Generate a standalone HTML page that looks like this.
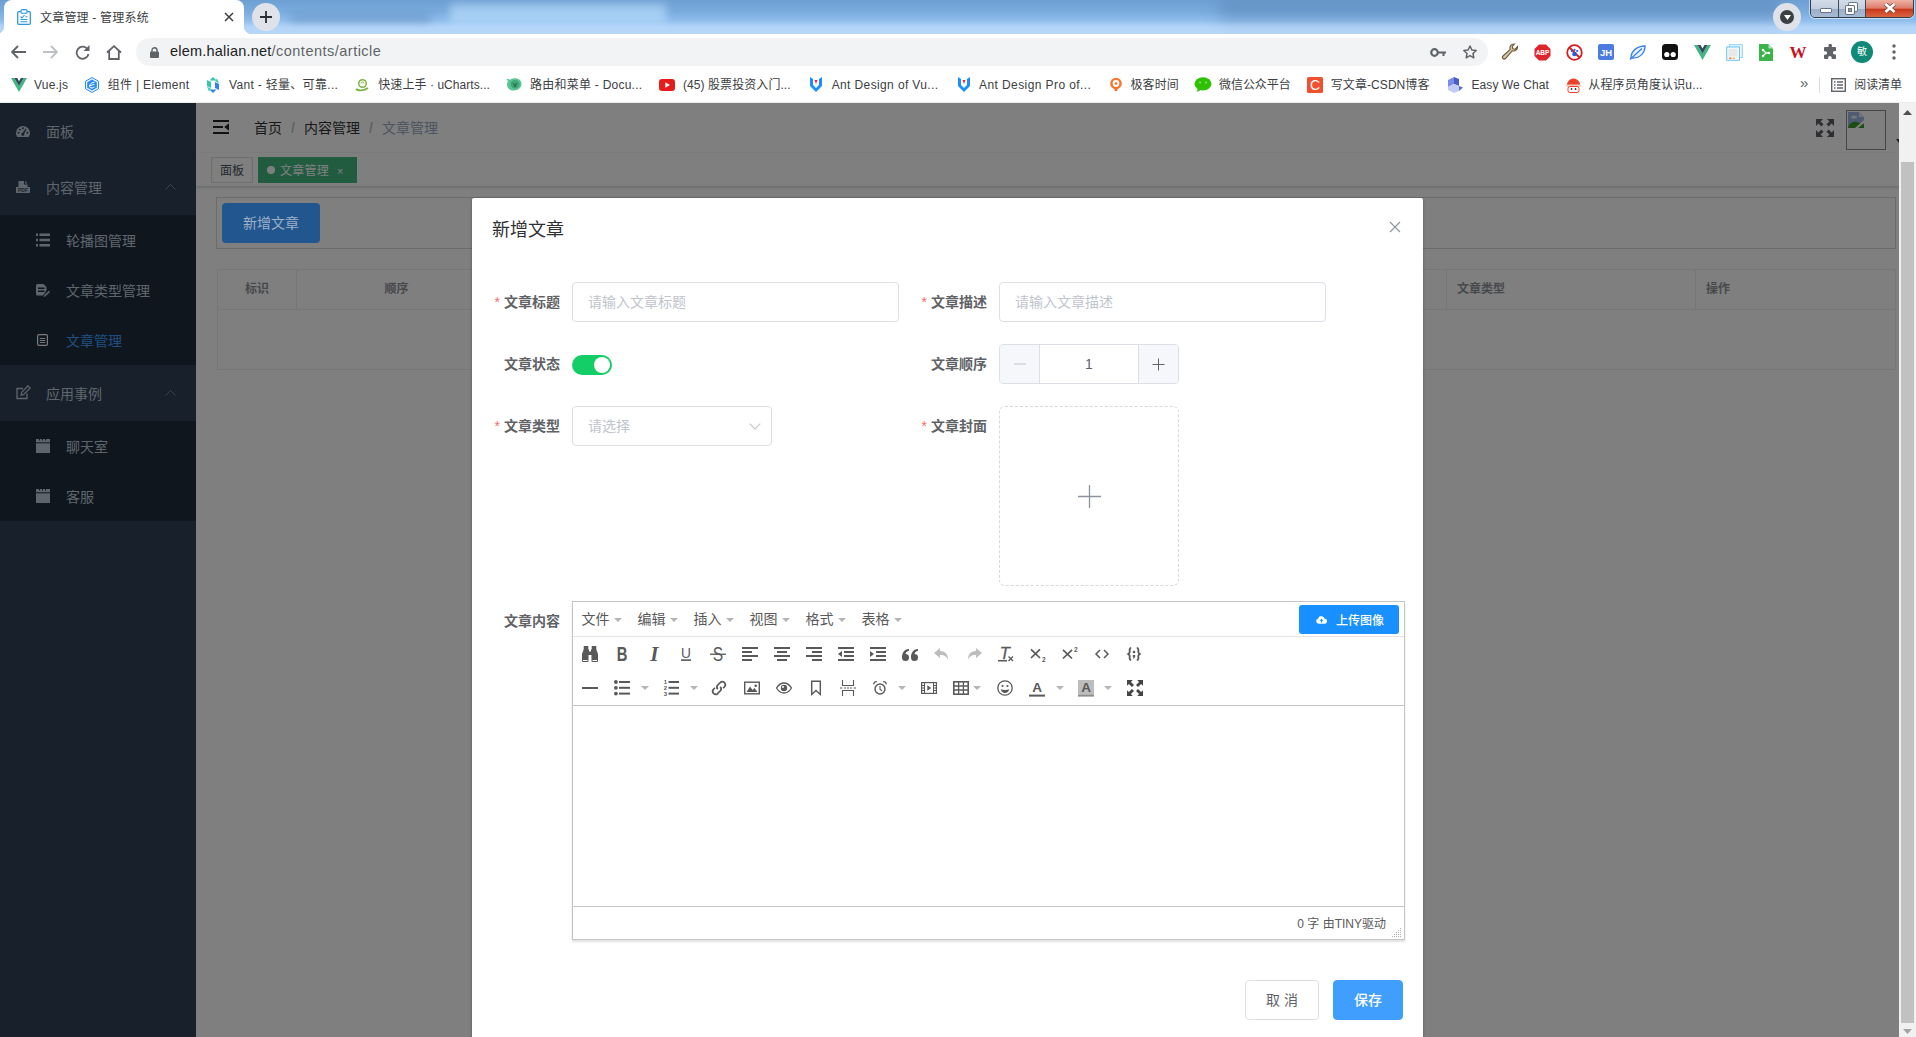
<!DOCTYPE html>
<html lang="zh-CN">
<head>
<meta charset="utf-8">
<title>文章管理 - 管理系统</title>
<style>
*{box-sizing:border-box;margin:0;padding:0}
html,body{width:1916px;height:1037px;overflow:hidden;background:#fff}
body{position:relative;font-family:"Liberation Sans","Noto Sans CJK SC",sans-serif;font-size:14px;color:#303133}
.abs{position:absolute}
svg{display:block}
/* ---------- browser chrome ---------- */
#tabbar{position:absolute;left:0;top:0;width:1916px;height:34px;background:linear-gradient(180deg,#6e9fd3 0,#7aacde 35%,#8fbdec 60%,#aacff5 74%,#b4d5f8 80%,#b6d7f9 100%)}
#tabbar .glow1{position:absolute;left:450px;top:4px;width:216px;height:20px;background:rgba(190,225,255,.6);filter:blur(4px)}
#tabbar .dark1{position:absolute;left:1220px;top:0;width:560px;height:20px;background:rgba(70,110,160,.35);filter:blur(8px)}
#tabbar .dark2{position:absolute;left:290px;top:14px;width:140px;height:9px;background:rgba(60,100,150,.28);filter:blur(4px)}
#tab{position:absolute;left:4px;top:0;width:240px;height:34px;background:#fff;border-radius:8px 8px 0 0}
#tab:before,#tab:after{content:"";position:absolute;bottom:0;width:8px;height:8px}
#tab:before{left:-8px;background:radial-gradient(circle at 0 0,transparent 8px,#fff 8.5px)}
#tab:after{right:-8px;background:radial-gradient(circle at 100% 0,transparent 8px,#fff 8.5px)}
#tab .title{position:absolute;left:36px;top:8px;font-size:12px;color:#3c4043;white-space:nowrap;letter-spacing:.2px}
#toolbar{position:absolute;left:0;top:34px;width:1916px;height:36px;background:#fff}
#omni{position:absolute;left:136px;top:4px;width:1352px;height:28px;border-radius:14px;background:#f1f3f4}
#omni .url{position:absolute;left:34px;top:5px;font-size:14.5px;color:#202124;white-space:nowrap;letter-spacing:.21px}
#omni .url span{color:#5f6368;letter-spacing:.49px}
#bmbar{position:absolute;left:0;top:70px;width:1916px;height:32px;background:#fff}
#bmbar .bm{position:absolute;top:7px;font-size:12px;color:#3c4043;white-space:nowrap;line-height:16px}
#chromeline{position:absolute;left:0;top:102px;width:1916px;height:1px;background:#ececec}

/* ---------- main (under overlay) ---------- */
#main{position:absolute;left:196px;top:0;width:1703px;height:934px;background:#fff}
#navbar{position:absolute;left:0;top:0;width:1703px;height:50px;background:#fff;box-shadow:0 1px 4px rgba(0,21,41,.08)}
#navbar .bc{position:absolute;top:15px;font-size:14px;line-height:20px;white-space:nowrap;color:#303133}
#navbar .bc.sep{color:#c0c4cc;font-weight:700}
#navbar .bc.last{color:#97a8be}
#tags{position:absolute;left:0;top:50px;width:1703px;height:34px;background:#fff;border-bottom:1px solid #d8dce5;box-shadow:0 1px 3px 0 rgba(0,0,0,.12),0 0 3px 0 rgba(0,0,0,.04)}
#tags .tag{position:absolute;top:4px;height:26px;line-height:26px;border:1px solid #d8dce5;font-size:12px;color:#495060;padding:0 8px;white-space:nowrap;background:#fff}
#tags .tag.on{background:#42b983;border-color:#42b983;color:#fff}
#tags .tag.on i{display:inline-block;width:8px;height:8px;border-radius:50%;background:#fff;margin-right:5px;position:relative;top:-1px}
#tags .tag.on b{font-weight:400;margin-left:8px;font-size:11px;letter-spacing:0}
#btnbox{position:absolute;left:20px;top:94px;width:1680px;height:52px;border:1px solid #d3d6db}
#btnbox .btn{position:absolute;left:4px;top:5px;width:98px;height:40px;border-radius:4px;background:#5c9ff8;background:#559cf5;color:#fff;font-size:14px;line-height:40px;text-align:center}
#tbl{position:absolute;left:21px;top:166px;width:1679px;height:101px;border:1px solid #ebeef5}
#tbl .hd{position:absolute;left:0;top:0;width:100%;height:40px;border-bottom:1px solid #ebeef5}
#tbl .th{position:absolute;top:0;height:39px;line-height:39px;font-size:12px;font-weight:700;color:#909399;border-right:1px solid #ebeef5;white-space:nowrap}

/* ---------- modal ---------- */
#modal{position:absolute;left:472px;top:95px;width:951px;height:842px;background:#fff;border-radius:2px;box-shadow:0 1px 3px rgba(0,0,0,.3)}
#modal .ttl{position:absolute;left:20px;top:20px;font-size:18px;line-height:24px;color:#303133;white-space:nowrap}
.lb{position:absolute;width:80px;height:40px;line-height:40px;padding-right:12px;text-align:right;font-size:14px;font-weight:700;color:#606266;white-space:nowrap}
.lb em{font-style:normal;font-weight:400;color:#f56c6c;margin-right:4px}
.inp{position:absolute;height:40px;border:1px solid #dcdfe6;border-radius:4px;background:#fff;font-size:14px;line-height:38px;color:#c0c4cc;padding-left:15px;white-space:nowrap}
.sw{position:absolute;left:100px;top:157px;width:40px;height:20px;border-radius:10px;background:#13ce66}
.sw:after{content:"";position:absolute;left:22px;top:2px;width:16px;height:16px;border-radius:50%;background:#fff}
.num{position:absolute;left:527px;top:146px;width:180px;height:40px;border:1px solid #dcdfe6;border-radius:4px;background:#fff;overflow:hidden}
.num .d,.num .i{position:absolute;top:0;width:40px;height:38px;background:#f5f7fa}
.num .d{left:0;border-right:1px solid #dcdfe6}
.num .i{right:0;border-left:1px solid #dcdfe6}
.num .v{position:absolute;left:40px;right:40px;top:0;line-height:38px;text-align:center;font-size:14px;color:#606266}
.upl{position:absolute;left:527px;top:208px;width:180px;height:180px;border:1px dashed #d9d9d9;border-radius:6px}
.fbtn{position:absolute;top:782px;height:40px;border-radius:4px;font-size:14px;line-height:38px;text-align:center;white-space:nowrap}

/* ---------- editor ---------- */
#ed{position:absolute;left:100px;top:403px;width:833px;height:339px;border:1px solid #c5c5c5;background:#fff;box-shadow:0 2px 2px rgba(0,0,0,.12)}
#ed .mb{position:absolute;left:0;top:0;width:831px;height:35px;border-bottom:1px solid #e3e3e3}
#ed .m{position:absolute;top:7px;font-size:14px;line-height:20px;color:#595959;white-space:nowrap}
#ed .m:after{content:"";position:absolute;left:32px;top:9px;border:4px solid transparent;border-top-color:#b5b5b5;border-bottom:0}
#ed .up{position:absolute;left:726px;top:3px;width:100px;height:29px;border-radius:3px;background:#1890ff;color:#fff;font-size:12px;line-height:29px;white-space:nowrap}
#ed .up span{position:absolute;left:37px;top:1.5px;font-weight:500}
#ed .tb{position:absolute;left:0;top:35px;width:831px;height:69px;border-bottom:1px solid #c5c5c5}
#ed .ic{position:absolute;width:16px;height:16px;overflow:visible}
#ed .ic text{font-family:"Liberation Sans",sans-serif}
#ed .cr{position:absolute;width:0;height:0;border:4px solid transparent;border-top-color:#b5b5b5;border-bottom:0}
#ed .sb{position:absolute;left:0;top:304px;width:831px;height:33px;border-top:1px solid #c5c5c5}
#ed .sb .t{position:absolute;right:18px;top:9px;font-size:12px;line-height:16px;color:#595959;white-space:nowrap}
/* ---------- page ---------- */
#page{position:absolute;left:0;top:103px;width:1899px;height:934px;overflow:hidden;background:#fff}
#sidebar{position:absolute;left:0;top:0;width:196px;height:934px;background:#304156}
.mi{position:absolute;left:0;width:196px;color:#bfcbd9;font-size:14px;white-space:nowrap}
.mi .tx{position:absolute;top:50%;margin-top:-9px;line-height:20px}
.mi.sub{background:#1f2d3d}
#overlay{position:absolute;left:0;top:0;width:1899px;height:934px;background:rgba(0,0,0,.5)}
#vscroll{position:absolute;left:1899px;top:103px;width:17px;height:934px;background:#f1f1f1}
#vscroll .thumb{position:absolute;left:2px;top:59px;width:13px;height:861px;background:#c1c1c1}
</style>
</head>
<body>
<!-- BROWSER CHROME -->
<div id="tabbar">
  <div class="glow1"></div><div class="dark1"></div><div class="dark2"></div>
  <div id="tab">
    <svg class="abs" style="left:13px;top:9px" width="14" height="16" viewBox="0 0 14 16"><rect x=".7" y="2.700" width="12.600" height="12.600" rx="1" fill="#fff" stroke="#2d9bd8" stroke-width="1.300"/><rect x="4" y=".6" width="6" height="3.600" rx="1" fill="#fff" stroke="#2d9bd8" stroke-width="1.100"/><path d="M3.500 7.500l1.500 1.500 2.500-3" fill="none" stroke="#2d9bd8" stroke-width="1.100"/><path d="M3.500 10.500h7M3.500 12.800h7M8.500 7.800h2" stroke="#2d9bd8" stroke-width="1.100"/></svg>
    <div class="title">文章管理 - 管理系统</div>
    <svg class="abs" style="left:220px;top:12px" width="10" height="10" viewBox="0 0 10 10"><path d="M1 1l8 8M9 1L1 9" stroke="#3c4043" stroke-width="1.500"/></svg>
  </div>
  <div class="abs" style="left:252px;top:3px;width:28px;height:28px;border-radius:50%;background:#dfe3e9"><svg class="abs" style="left:8px;top:8px" width="12" height="12" viewBox="0 0 12 12"><path d="M6 0v12M0 6h12" stroke="#2a2d31" stroke-width="1.800"/></svg></div>
  <div class="abs" style="left:1773px;top:3px;width:28px;height:28px;border-radius:50%;background:#dfe3e9"><div class="abs" style="left:7px;top:7px;width:14px;height:14px;border-radius:50%;background:#3c4043"><svg class="abs" style="left:3.500px;top:5px" width="7" height="5" viewBox="0 0 7 5"><path d="M0 0h7L3.500 5z" fill="#fff"/></svg></div></div>
  <div class="abs" style="left:1810px;top:-1px;width:104px;height:19px;border:1px solid #2f3c4c;border-radius:0 0 5px 5px;overflow:hidden;box-shadow:0 0 0 1px rgba(255,255,255,.55)">
    <div class="abs" style="left:0;top:0;width:28px;height:18px;background:linear-gradient(#d3dce8 0,#c2cede 48%,#9db0c8 52%,#a9bdd5 100%);border-right:1px solid #3d4a5c"><div class="abs" style="left:8.500px;top:8px;width:12px;height:5px;background:#fff;border:1px solid #66758a;border-radius:1px"></div></div>
    <div class="abs" style="left:28px;top:0;width:27px;height:18px;background:linear-gradient(#d3dce8 0,#c2cede 48%,#9db0c8 52%,#a9bdd5 100%);border-right:1px solid #3d4a5c"><div class="abs" style="left:10px;top:3px;width:8px;height:8px;border:2px solid #fff;border-radius:1px;box-shadow:0 0 0 1px #66758a"></div><div class="abs" style="left:7px;top:6px;width:8px;height:8px;border:2px solid #fff;border-radius:1px;box-shadow:0 0 0 1px #66758a,inset 0 0 0 1px #66758a;background:#8d9db3"></div></div>
    <div class="abs" style="left:55px;top:0;width:48px;height:18px;background:linear-gradient(#efb3a6 0,#dd7c68 45%,#c9391c 52%,#dd6a48 100%)"><svg class="abs" style="left:17.500px;top:3px" width="12" height="10" viewBox="0 0 12 10"><path d="M1.500 1l9 8M10.500 1l-9 8" stroke="#6a4a45" stroke-width="4.200"/><path d="M1.500 1l9 8M10.500 1l-9 8" stroke="#fff" stroke-width="2.700"/></svg></div>
  </div>
</div>
<div id="toolbar"><svg class="abs" style="left:10.5px;top:11.0px" width="15" height="14" viewBox="0 0 15 14"><path d="M7 1L1 7l6 6M1.500 7H15" fill="none" stroke="#5f6368" stroke-width="1.800"/></svg><svg class="abs" style="left:42.5px;top:11.0px" width="15" height="14" viewBox="0 0 15 14"><path d="M8 1l6 6-6 6M13.500 7H0" fill="none" stroke="#bdc1c6" stroke-width="1.800"/></svg><svg class="abs" style="left:74.5px;top:10.5px" width="15" height="15" viewBox="0 0 15 15"><path d="M12.500 4.200A6 6 0 1 0 13.500 9" fill="none" stroke="#5f6368" stroke-width="1.800"/><path d="M14.500 0v6h-6z" fill="#5f6368"/></svg><svg class="abs" style="left:106.0px;top:10.5px" width="16" height="15" viewBox="0 0 16 15"><path d="M1 7.500L8 1.200l7 6.300M3.200 6v8h9.600V6" fill="none" stroke="#5f6368" stroke-width="1.800"/></svg><div id="omni"><svg class="abs" style="left:13.5px;top:8.5px" width="9" height="11" viewBox="0 0 9 11"><rect x="0" y="4.500" width="9" height="6.500" rx="1" fill="#5f6368"/><path d="M2 5V3.200a2.500 2.500 0 0 1 5 0V5" fill="none" stroke="#5f6368" stroke-width="1.400"/></svg><div class="url">elem.halian.net<span>/contents/article</span></div></div><svg class="abs" style="left:1430.0px;top:13.5px" width="16" height="9" viewBox="0 0 16 9"><circle cx="4.500" cy="4.500" r="3.300" fill="none" stroke="#5f6368" stroke-width="2.200"/><path d="M8 3.500h8v2h-1.500V8h-2V5.500H8z" fill="#5f6368"/></svg><svg class="abs" style="left:1462.2px;top:10.0px" width="16" height="15" viewBox="0 0 16 15"><path d="M8 2l1.900 4 4.300.5-3.200 3 .8 4.300L8 11.700l-3.800 2.100.8-4.300-3.200-3 4.300-.5z" fill="none" stroke="#5f6368" stroke-width="1.500" stroke-linejoin="round"/></svg><svg class="abs" style="left:1501.0px;top:9.0px" width="18" height="18" viewBox="0 0 18 18"><path d="M16.500 3.500a4 4 0 0 1-5.300 4.300L4.500 15.500a1.700 1.700 0 0 1-2.500-2.500l7.200-6.700A4 4 0 0 1 13.500 1l-2.200 2.300.5 2.400 2.400.5z" fill="#d9c7a5" stroke="#6b5a3a" stroke-width="1.100"/></svg><svg class="abs" style="left:1533.5px;top:9.5px" width="17" height="17" viewBox="0 0 17 17"><path d="M5 .5h7L16.500 5v7L12 16.500H5L.5 12V5z" fill="#e0242d"/><text x="8.500" y="11.300" font-size="6.500" font-weight="700" fill="#fff" text-anchor="middle" font-family="Liberation Sans,sans-serif">ABP</text></svg><svg class="abs" style="left:1565.5px;top:9.5px" width="17" height="17" viewBox="0 0 17 17"><circle cx="8.500" cy="8.500" r="7.300" fill="#fff" stroke="#d81e1e" stroke-width="1.800"/><path d="M3.500 3.500l10 10" stroke="#d81e1e" stroke-width="1.800"/><circle cx="8.500" cy="10" r="2.300" fill="#2a5bd7"/><circle cx="5.800" cy="7" r="1.100" fill="#2a5bd7"/><circle cx="8.500" cy="5.800" r="1.100" fill="#2a5bd7"/><circle cx="11.200" cy="7" r="1.100" fill="#2a5bd7"/></svg><svg class="abs" style="left:1598.0px;top:10.0px" width="16" height="16" viewBox="0 0 16 16"><rect width="16" height="16" rx="2" fill="#4d7ce0"/><text x="8" y="12" font-size="9.500" font-weight="700" fill="#fff" text-anchor="middle" font-family="Liberation Sans,sans-serif">JH</text></svg><svg class="abs" style="left:1629.0px;top:10.0px" width="18" height="16" viewBox="0 0 18 16"><path d="M2 14C2 7 8 2 16 2c0 7-5 12-12 12z" fill="#eaf2ff" stroke="#3b82f0" stroke-width="1.400"/><path d="M1 15.500L13 4.500" stroke="#3b82f0" stroke-width="1.300"/></svg><svg class="abs" style="left:1662.0px;top:10.0px" width="16" height="16" viewBox="0 0 16 16"><rect width="16" height="16" rx="3.500" fill="#111"/><circle cx="4.800" cy="10.500" r="2.600" fill="#fff"/><circle cx="11.200" cy="10.500" r="2.600" fill="#fff"/></svg><svg class="abs" style="left:1693.5px;top:10.5px" width="17" height="15" viewBox="0 0 17 15"><path d="M0 0h3.500l5 8.500 5-8.500H17L8.500 15z" fill="#41b883"/><path d="M3.500 0h3l2 3.500 2-3.500h3l-5 8.500z" fill="#35495e"/></svg><svg class="abs" style="left:1725.5px;top:9.5px" width="17" height="17" viewBox="0 0 17 17"><rect x="3.500" y=".7" width="12.800" height="12.800" fill="#e6f6fd" stroke="#8fd3f4" stroke-width="1"/><rect x=".7" y="3" width="12.800" height="13.300" fill="#f3fbff" stroke="#6cc4ee" stroke-width="1"/><rect x="2.500" y="5" width="9" height="7.500" fill="#e8e8e8"/><rect x="3" y="13.600" width="2.500" height="1.200" fill="#f05a4f"/><rect x="6.500" y="13.600" width="2.500" height="1.200" fill="#f2b134"/></svg><svg class="abs" style="left:1759.0px;top:9.5px" width="14" height="17" viewBox="0 0 14 17"><path d="M0 0h9.500L14 4.500V17H0z" fill="#3bb54a"/><path d="M9.500 0L14 4.500H9.500z" fill="#b7e3bc"/><path d="M4 6l3 3-3 3M7 9h3" stroke="#fff" stroke-width="1.300" fill="none"/><circle cx="4" cy="6" r="1.200" fill="#fff"/><circle cx="4" cy="12" r="1.200" fill="#fff"/><circle cx="10" cy="9" r="1.200" fill="#fff"/></svg><div class="abs" style="left:1789px;top:6px;width:18px;height:24px;font:700 17px/25px 'Liberation Serif',serif;color:#c8101b;text-align:center">W</div><svg class="abs" style="left:1821.7px;top:10.0px" width="16" height="16" viewBox="0 0 16 16"><path d="M6.500 1.500a1.700 1.700 0 0 1 3.400 0V3H13a1 1 0 0 1 1 1v3h-1.300a1.800 1.800 0 0 0 0 3.600H14V14a1 1 0 0 1-1 1H9.700v-1.300a1.800 1.800 0 0 0-3.600 0V15H3a1 1 0 0 1-1-1v-3.200h1.300a1.800 1.800 0 0 0 0-3.600H2V4a1 1 0 0 1 1-1h3.500z" fill="#5f6368"/></svg><div class="abs" style="left:1851px;top:7px;width:22px;height:22px;border-radius:50%;background:#0f8a77;color:#fff;font-size:10px;line-height:22px;text-align:center">敏</div><svg class="abs" style="left:1892.2px;top:10.0px" width="4" height="16" viewBox="0 0 4 16"><circle cx="2" cy="2" r="1.700" fill="#5f6368"/><circle cx="2" cy="8" r="1.700" fill="#5f6368"/><circle cx="2" cy="14" r="1.700" fill="#5f6368"/></svg></div>
<div id="bmbar"><svg class="abs" style="left:11px;top:7.5px" width="16" height="14" viewBox="0 0 16 14"><path d="M0 0h3.300l4.700 8 4.700-8H16L8 14z" fill="#41b883"/><path d="M3.300 0h2.900L8 3.200 9.800 0h2.900L8 8z" fill="#35495e"/></svg><svg class="abs" style="left:84.2px;top:6.5px" width="16" height="16" viewBox="0 0 16 16"><path d="M8 .5l6.500 3.700v7.600L8 15.500 1.500 11.800V4.200z" fill="#eaf4ff" stroke="#2d8cf0" stroke-width="1"/><path d="M8 2.500l4.800 2.700v5.600L8 13.500 3.200 10.800V5.200z" fill="#2d8cf0"/><path d="M5.500 9.800c0-3 2.500-4.300 5-4.600M5.500 8.800l5-1.400M5.800 10.500c1.500.8 3.500.3 4.700-.5" stroke="#fff" stroke-width="1" fill="none"/></svg><svg class="abs" style="left:205.4px;top:6.5px" width="16" height="16" viewBox="0 0 16 16"><path d="M8 0l3.500 3.500H4.500z" fill="#38c6b4"/><path d="M2 3l4 2v6l-4-2z" fill="#36c2b2"/><path d="M14 13l-4-2V5l4 2z" fill="#2f86e8"/><path d="M8 16l-3.500-3.500h7z" fill="#2f86e8"/><path d="M2 9.500L6 12l-2 2.500z" fill="#34d0a8"/><path d="M14 6.500L10 4l2-2.500z" fill="#34d0a8"/></svg><svg class="abs" style="left:353.7px;top:7.5px" width="16" height="14" viewBox="0 0 16 14"><path d="M2 11c2 2 8 2 12-1" fill="none" stroke="#7cb342" stroke-width="1.800"/><circle cx="8.500" cy="5.500" r="3.800" fill="none" stroke="#7cb342" stroke-width="1.500"/><path d="M7 5.500a1.500 1.500 0 0 1 3 0" fill="none" stroke="#7cb342" stroke-width="1"/></svg><svg class="abs" style="left:506px;top:6.5px" width="16" height="16" viewBox="0 0 16 16"><path d="M8.500 1.200c4.500 0 7 2.300 7 5.800s-3 6.500-7.500 6.500S1 11 1 7.500c0-1.500.5-2.500 1-3.300-.3-.8-.8-1.500-1.500-2 1.500-.3 2.500 0 3.300.6C5 2 6.500 1.200 8.500 1.200z" fill="#5cc595"/><ellipse cx="9" cy="7.200" rx="4.500" ry="4.200" fill="#3da876"/><text x="9" y="9.500" font-size="6" font-weight="700" fill="#1f5a3e" text-anchor="middle" font-family="Liberation Sans,sans-serif">V</text></svg><svg class="abs" style="left:658.9px;top:8.5px" width="16" height="12" viewBox="0 0 16 12"><rect width="16" height="12" rx="3" fill="#e61c1c"/><path d="M6.300 3.200v5.600L11 6z" fill="#fff"/></svg><svg class="abs" style="left:809.2px;top:7.0px" width="14" height="15" viewBox="0 0 14 15"><path d="M1 0l3 2v6l3 3 3-3V2l3-2v9l-6 6-6-6z" fill="#1890ff"/><path d="M5.500 3h3l-1.500 4z" fill="#f5222d"/></svg><svg class="abs" style="left:956.5px;top:7.0px" width="14" height="15" viewBox="0 0 14 15"><path d="M1 0l3 2v6l3 3 3-3V2l3-2v9l-6 6-6-6z" fill="#1890ff"/><path d="M5.500 3h3l-1.500 4z" fill="#f5222d"/></svg><svg class="abs" style="left:1108.8px;top:6.5px" width="14" height="16" viewBox="0 0 14 16"><circle cx="7" cy="6.500" r="4.600" fill="none" stroke="#f7752d" stroke-width="2.400"/><path d="M5 10.500h4l-.8 3.500H5.800z" fill="#f7752d"/><circle cx="7" cy="6.500" r="1.300" fill="#f7752d"/></svg><svg class="abs" style="left:1194px;top:7.0px" width="18" height="15" viewBox="0 0 18 15"><ellipse cx="9" cy="6.800" rx="8.500" ry="6.600" fill="#2dc100"/><path d="M4 11.500l-1.500 3.500 4.500-2z" fill="#2dc100"/><circle cx="6" cy="5.500" r="1.100" fill="#8ee07a"/><circle cx="12" cy="5.500" r="1.100" fill="#8ee07a"/></svg><svg class="abs" style="left:1306.7px;top:6.5px" width="16" height="16" viewBox="0 0 16 16"><rect width="16" height="16" rx="1.500" fill="#f0502f"/><text x="8" y="13" font-size="14" fill="#fff" text-anchor="middle" font-family="Liberation Sans,sans-serif">C</text></svg><svg class="abs" style="left:1446px;top:6.5px" width="18" height="16" viewBox="0 0 18 16"><path d="M8 0l5 2v7l-5-2z" fill="#4b5cc4"/><path d="M8 0v7L2 10V3z" fill="#7b8ce8"/><path d="M2 10l6-3 5 2v5l-5 2-6-3z" fill="#c3cbf7"/><path d="M13 9l4 1.500-4 3.500z" fill="#5b6fd8"/></svg><svg class="abs" style="left:1564.8px;top:6.5px" width="17" height="16" viewBox="0 0 17 16"><path d="M2 8a6.500 6.500 0 0 1 13 0z" fill="#e8412c"/><rect x="1" y="7.500" width="15" height="2.200" rx="1" fill="#f6c7b8"/><rect x="3" y="9.500" width="11" height="6" rx="2" fill="#fff" stroke="#e8412c" stroke-width="1"/><circle cx="6.500" cy="12" r=".9" fill="#333"/><circle cx="10.500" cy="12" r=".9" fill="#333"/></svg><div class="bm" style="left:34px;letter-spacing:0.199px">Vue.js</div><div class="bm" style="left:107.7px;letter-spacing:0.324px">组件 | Element</div><div class="bm" style="left:229px;letter-spacing:0.315px">Vant - 轻量、可靠...</div><div class="bm" style="left:378.3px;letter-spacing:0.060px">快速上手 · uCharts...</div><div class="bm" style="left:530.1px;letter-spacing:0.234px">路由和菜单 - Docu...</div><div class="bm" style="left:683px;letter-spacing:0.072px">(45) 股票投资入门...</div><div class="bm" style="left:831.7px;letter-spacing:0.378px">Ant Design of Vu...</div><div class="bm" style="left:979px;letter-spacing:0.412px">Ant Design Pro of...</div><div class="bm" style="left:1130.4px;letter-spacing:0.150px">极客时间</div><div class="bm" style="left:1219px;letter-spacing:-0.053px">微信公众平台</div><div class="bm" style="left:1330.8px;letter-spacing:0.070px">写文章-CSDN博客</div><div class="bm" style="left:1471.5px;letter-spacing:0.068px">Easy We Chat</div><div class="bm" style="left:1588.3px;letter-spacing:0.134px">从程序员角度认识u...</div><div class="bm" style="left:1854.3px;letter-spacing:-0.125px">阅读清单</div><div class="bm" style="left:1800px;top:5px;font-size:15px;color:#5f6368">»</div><div class="abs" style="left:1819px;top:7px;width:1px;height:16px;background:#dadce0"></div><svg class="abs" style="left:1831px;top:7.5px" width="15" height="14" viewBox="0 0 15 14"><rect x=".7" y=".7" width="13.600" height="12.600" fill="none" stroke="#5f6368" stroke-width="1.400"/><path d="M3 4h1.500M3 7h1.500M3 10h1.500M6 4h6M6 7h6M6 10h6" stroke="#5f6368" stroke-width="1.400"/></svg></div>
<div id="chromeline"></div>
<!-- PAGE -->
<div id="page">
  <div id="main">
    <div id="navbar">
      <svg class="abs" style="left:17px;top:17px" width="17" height="14" viewBox="0 0 17 14"><path d="M0 0h16v2H0zM0 6h10v2H0zM0 12h16v2H0zM16 3.2v7.6L11.2 7z" fill="#222"/></svg>
      <div class="bc" style="left:58px">首页</div>
      <div class="bc sep" style="left:95px">/</div>
      <div class="bc" style="left:108px">内容管理</div>
      <div class="bc sep" style="left:173px">/</div>
      <div class="bc last" style="left:186px">文章管理</div>
      <svg class="abs" style="left:1620px;top:16px" width="18" height="18" viewBox="0 0 18 18"><path d="M0 0h7L4.6 2.4 7.5 5.3 5.3 7.5 2.4 4.6 0 7zM18 0v7l-2.4-2.4-2.9 2.9-2.2-2.2 2.9-2.9L11 0zM0 18v-7l2.4 2.4 2.9-2.9 2.2 2.2-2.9 2.9L7 18zM18 18h-7l2.4-2.4-2.9-2.9 2.2-2.2 2.9 2.9L18 11z" fill="#5a5e66"/></svg>
      <div class="abs" style="left:1650px;top:7px;width:40px;height:40px;border:1px solid #8a8f96;border-radius:0">
        <svg class="abs" style="left:1px;top:1px" width="16" height="16" viewBox="0 0 16 16"><path d="M0 0h11l5 5v11H0z" fill="#9db7e0"/><path d="M11 0l5 5h-5z" fill="#dfe8f5"/><path d="M0 16c1-5 5-7 9-6l7 2v4z" fill="#3a9a2a"/><path d="M7 16l9-8v3l-6 5z" fill="#fff"/><ellipse cx="6" cy="5" rx="3" ry="1.6" fill="#e8eef8"/></svg>
      </div>
      <svg class="abs" style="left:1700px;top:36px" width="6" height="4" viewBox="0 0 6 4"><path d="M0 0h6L3 4z" fill="#333"/></svg>
    </div>
    <div id="tags">
      <div class="tag" style="left:15px">面板</div>
      <div class="tag on" style="left:62px;width:99px;letter-spacing:.25px"><i></i>文章管理<b>×</b></div>
    </div>
    <div id="btnbox"></div>
    <div id="tbl">
      <div class="hd"></div>
      <div class="th" style="left:0;width:79px;text-align:center">标识</div>
      <div class="th" style="left:79px;width:200px;text-align:center">顺序</div>
      <div class="th" style="left:1228px;width:250px;padding-left:10px;border-left:1px solid #ebeef5">文章类型</div>
      <div class="th" style="left:1478px;width:200px;padding-left:10px;border-right:0">操作</div>
    </div>
  </div>
  <div id="sidebar">
<div class="mi" style="top:0px;height:56px"><svg class="abs" style="left:16px;top:22.5px" width="14" height="11" viewBox="0 0 14 11"><path d="M7 0a7 7 0 0 0-7 7c0 1.500.5 2.900 1.300 4h11.400c.8-1.100 1.300-2.500 1.300-4a7 7 0 0 0-7-7z" fill="#bfcbd9"/><circle cx="2.600" cy="6.800" r=".95" fill="#304156"/><circle cx="3.900" cy="3.600" r=".95" fill="#304156"/><circle cx="11.400" cy="6.800" r=".95" fill="#304156"/><circle cx="7" cy="2.300" r=".95" fill="#304156"/><path d="M9.600 2.800l.9.500-2.300 4.300a1.500 1.500 0 1 1-1.500-.8z" fill="#304156"/></svg><span class="tx" style="left:46px">面板</span></div>
<div class="mi" style="top:56px;height:56px"><svg class="abs" style="left:16px;top:22px" width="14" height="12" viewBox="0 0 14 12"><path d="M2.500 0h5.500v3.500h3.500V6h-9z" fill="#bfcbd9"/><path d="M9 0l2.500 2.500H9z" fill="#bfcbd9"/><rect x="0" y="6" width="14" height="6" fill="#bfcbd9"/><text x="7" y="10.800" font-size="5" font-weight="700" text-anchor="middle" fill="#304156" font-family="Liberation Sans,sans-serif">PDF</text></svg><span class="tx" style="left:46px">内容管理</span><svg class="abs" style="left:165px;top:25px" width="11" height="6" viewBox="0 0 11 6"><path d="M.5 5.5l5-5 5 5" fill="none" stroke="#7a8898" stroke-width="1"/></svg></div>
<div class="mi sub" style="top:112px;height:50px"><svg class="abs" style="left:36px;top:18px" width="14" height="14" viewBox="0 0 14 14"><path d="M0 .5h2v2.500H0zM3.500 .5H14v2.500H3.500zM0 5.700h2v2.500H0zM3.500 5.700H14v2.500H3.500zM0 11h2v2.500H0zM3.500 11H14v2.500H3.500z" fill="#bfcbd9"/></svg><span class="tx" style="left:66px">轮播图管理</span></div>
<div class="mi sub" style="top:162px;height:50px"><svg class="abs" style="left:36px;top:18.500px" width="14" height="13" viewBox="0 0 14 13"><path d="M1.500 0h6l3 3v3.500L7 11.500H1.500A1.500 1.500 0 0 1 0 10V1.500A1.500 1.500 0 0 1 1.500 0z" fill="#bfcbd9"/><path d="M2 4.200h6.500M2 7.200h6.500" stroke="#1f2d3d" stroke-width="1.400"/><path d="M12.800 6.800l1.200 1.200-4.800 4.600-1.600.4.400-1.600z" fill="#bfcbd9"/></svg><span class="tx" style="left:66px">文章类型管理</span></div>
<div class="mi sub" style="top:212px;height:50px;color:#409eff"><svg class="abs" style="left:37px;top:19px" width="11" height="12" viewBox="0 0 11 12"><rect x=".6" y=".6" width="9.800" height="10.800" rx="1.300" fill="none" stroke="#f4f6f8" stroke-width="1.200"/><path d="M2.800 4.500h5.400M2.800 6.500h5.400M2.800 8.500h5.400" stroke="#e8ecf0" stroke-width="1"/></svg><span class="tx" style="left:66px">文章管理</span></div>
<div class="mi" style="top:262px;height:56px"><svg class="abs" style="left:16px;top:20px" width="15" height="15" viewBox="0 0 15 15"><path d="M11 8.500V13.500H1V3.500h6" fill="none" stroke="#bfcbd9" stroke-width="1.300"/><path d="M12 .8l2.200 2.200-6.400 6.400-2.800.700.700-2.800z" fill="none" stroke="#bfcbd9" stroke-width="1.200"/></svg><span class="tx" style="left:46px">应用事例</span><svg class="abs" style="left:165px;top:25px" width="11" height="6" viewBox="0 0 11 6"><path d="M.5 5.5l5-5 5 5" fill="none" stroke="#7a8898" stroke-width="1"/></svg></div>
<div class="mi sub" style="top:318px;height:50px"><svg class="abs" style="left:36px;top:17px" width="14" height="15" viewBox="0 0 14 15"><path d="M0 1h3v1.500h1V1h2v1.500h1V1h2v1.500h1V1h4v14H0z" fill="#bfcbd9"/><rect x="0" y="4.300" width="14" height="1" fill="#1f2d3d"/></svg><span class="tx" style="left:66px">聊天室</span></div>
<div class="mi sub" style="top:368px;height:50px"><svg class="abs" style="left:36px;top:17px" width="14" height="15" viewBox="0 0 14 15"><path d="M0 1h3v1.500h1V1h2v1.500h1V1h2v1.500h1V1h4v14H0z" fill="#bfcbd9"/><rect x="0" y="4.300" width="14" height="1" fill="#1f2d3d"/></svg><span class="tx" style="left:66px">客服</span></div>
</div>
  <div id="overlay"></div>
  <div class="abs" style="left:222px;top:100px;width:98px;height:40px;border-radius:4px;background:#22568f;color:#9fb0c6;font-size:14px;line-height:40px;text-align:center">新增文章</div>
  <div id="modal">
    <div class="ttl">新增文章</div>
    <svg class="abs" style="left:917px;top:23px" width="12" height="12" viewBox="0 0 12 12"><path d="M1 1l10 10M11 1L1 11" stroke="#909399" stroke-width="1.100" fill="none"/></svg>
    <div class="lb" style="left:20px;top:84px"><em>*</em>文章标题</div>
    <div class="inp" style="left:100px;top:84px;width:327px">请输入文章标题</div>
    <div class="lb" style="left:447px;top:84px"><em>*</em>文章描述</div>
    <div class="inp" style="left:527px;top:84px;width:327px">请输入文章描述</div>
    <div class="lb" style="left:20px;top:146px">文章状态</div>
    <div class="sw"></div>
    <div class="lb" style="left:447px;top:146px">文章顺序</div>
    <div class="num"><div class="d"><svg class="abs" style="left:14px;top:18px" width="12" height="2"><rect width="12" height="1" y=".5" fill="#c0c4cc"/></svg></div><div class="v">1</div><div class="i"><svg class="abs" style="left:13px;top:13px" width="13" height="13" viewBox="0 0 13 13"><path d="M6.500 .5v12M.5 6.500h12" stroke="#606266" stroke-width="1"/></svg></div></div>
    <div class="lb" style="left:20px;top:208px"><em>*</em>文章类型</div>
    <div class="inp" style="left:100px;top:208px;width:200px">请选择<svg class="abs" style="left:176px;top:16px" width="12" height="7" viewBox="0 0 12 7"><path d="M.7 .7l5.300 5.300L11.300 .7" fill="none" stroke="#c0c4cc" stroke-width="1.100"/></svg></div>
    <div class="lb" style="left:447px;top:208px"><em>*</em>文章封面</div>
    <div class="upl"><svg class="abs" style="left:78px;top:78px" width="23" height="23" viewBox="0 0 23 23"><path d="M11.500 0v23M0 11.500h23" stroke="#8c939d" stroke-width="1.300"/></svg></div>
    <div class="lb" style="left:20px;top:403px">文章内容</div>
    <div id="ed">
      <div class="mb"><div class="m" style="left:8.5px">文件</div><div class="m" style="left:64.5px">编辑</div><div class="m" style="left:120.5px">插入</div><div class="m" style="left:176.5px">视图</div><div class="m" style="left:232.5px">格式</div><div class="m" style="left:288.5px">表格</div>
        <div class="up"><svg class="abs" style="left:17px;top:10px" width="11" height="9" viewBox="0 0 13 10"><path d="M3.200 10A3.200 3.200 0 0 1 2.600 3.700 4 4 0 0 1 10.300 4.200 2.900 2.900 0 0 1 10 10z" fill="#fff"/><path d="M6.500 4L4.200 6.500h1.500V8.500h1.600V6.500h1.500z" fill="#1890ff"/></svg><span>上传图像</span></div>
      </div>
      <div class="tb"><svg class="ic" style="left:9px;top:9px" viewBox="0 0 16 16"><path d="M1.700 0h4.600v3.500H7v2h2v-2h.7V0h4.600v3.500L16 8v7a1 1 0 0 1-1 1h-4.500a1 1 0 0 1-1-1V9h-3v6a1 1 0 0 1-1 1H1a1 1 0 0 1-1-1V8l1.700-4.500z" fill="#595959"/><rect x="1" y="14" width="4.500" height="1" fill="#fff"/><rect x="10.500" y="14" width="4.500" height="1" fill="#fff"/></svg><svg class="ic" style="left:41px;top:9px" viewBox="0 0 16 16"><text transform="translate(8 15) scale(.76 1)" font-size="19.500" font-weight="700" text-anchor="middle" fill="#595959">B</text></svg><svg class="ic" style="left:73px;top:9px" viewBox="0 0 16 16"><text x="8.300" y="15" font-size="21" font-style="italic" font-weight="700" text-anchor="middle" fill="#595959" style="font-family:'Liberation Serif',serif">I</text></svg><svg class="ic" style="left:105px;top:9px" viewBox="0 0 16 16"><text transform="translate(8 12.300) scale(.9 1)" font-size="15.300" text-anchor="middle" fill="#595959">U</text><rect x="3" y="13.300" width="10" height="1.600" fill="#595959"/></svg><svg class="ic" style="left:137px;top:9px" viewBox="0 0 16 16"><text transform="translate(8 15) scale(.8 1)" font-size="19.500" text-anchor="middle" fill="#595959">S</text><rect x="0" y="7.600" width="16" height="1.300" fill="#595959"/></svg><svg class="ic" style="left:169px;top:9px" viewBox="0 0 16 16"><rect x="0" y="1" width="16" height="2" fill="#595959"/><rect x="0" y="5" width="10" height="2" fill="#595959"/><rect x="0" y="9" width="16" height="2" fill="#595959"/><rect x="0" y="13" width="10" height="2" fill="#595959"/></svg><svg class="ic" style="left:201px;top:9px" viewBox="0 0 16 16"><rect x="0" y="1" width="16" height="2" fill="#595959"/><rect x="3" y="5" width="10" height="2" fill="#595959"/><rect x="0" y="9" width="16" height="2" fill="#595959"/><rect x="3" y="13" width="10" height="2" fill="#595959"/></svg><svg class="ic" style="left:233px;top:9px" viewBox="0 0 16 16"><rect x="0" y="1" width="16" height="2" fill="#595959"/><rect x="6" y="5" width="10" height="2" fill="#595959"/><rect x="0" y="9" width="16" height="2" fill="#595959"/><rect x="6" y="13" width="10" height="2" fill="#595959"/></svg><svg class="ic" style="left:265px;top:9px" viewBox="0 0 16 16"><rect x="0" y="1" width="16" height="2" fill="#595959"/><rect x="6" y="5" width="10" height="2" fill="#595959"/><rect x="6" y="9" width="10" height="2" fill="#595959"/><rect x="0" y="13" width="16" height="2" fill="#595959"/><path d="M4 5v6L0 8z" fill="#595959"/></svg><svg class="ic" style="left:297px;top:9px" viewBox="0 0 16 16"><rect x="0" y="1" width="16" height="2" fill="#595959"/><rect x="6" y="5" width="10" height="2" fill="#595959"/><rect x="6" y="9" width="10" height="2" fill="#595959"/><rect x="0" y="13" width="16" height="2" fill="#595959"/><path d="M0 5v6l4-3z" fill="#595959"/></svg><svg class="ic" style="left:329px;top:9px" viewBox="0 0 16 16"><path d="M3.500 8A3.500 3.500 0 1 1 0 11.500C0 6 3 3 7 3v2C5 5 3.500 6.500 3.500 8zM12.500 8A3.500 3.500 0 1 1 9 11.500C9 6 12 3 16 3v2c-2 0-3.500 1.500-3.500 3z" fill="#595959"/></svg><svg class="ic" style="left:361px;top:9px" viewBox="0 0 16 16"><path d="M6 2v3c5 0 8 3 8 9-1-3-3-5-8-5v3L0 7z" fill="#bdbdbd"/></svg><svg class="ic" style="left:393px;top:9px" viewBox="0 0 16 16"><path d="M10 2v3C5 5 2 8 2 14c1-3 3-5 8-5v3l6-5z" fill="#bdbdbd"/></svg><svg class="ic" style="left:425px;top:9px" viewBox="0 0 16 16"><text x="6.800" y="12.500" font-size="16.500" font-style="italic" text-anchor="middle" fill="#595959" stroke="#595959" stroke-width=".3">T</text><rect x="0" y="14" width="9" height="1.500" fill="#595959"/><path d="M10.500 10.500l4.500 4.500M15 10.500L10.500 15" stroke="#595959" stroke-width="1.300"/></svg><svg class="ic" style="left:457px;top:9px" viewBox="0 0 16 16"><path d="M1 3.300l9 8.700M10 3.300l-9 8.700" stroke="#595959" stroke-width="1.700"/><text x="13.700" y="16" font-size="6.500" font-weight="700" text-anchor="middle" fill="#595959">2</text></svg><svg class="ic" style="left:489px;top:9px" viewBox="0 0 16 16"><path d="M1 3.800l9 8.700M10 3.800l-9 8.700" stroke="#595959" stroke-width="1.700"/><text x="13.700" y="5.500" font-size="6.500" font-weight="700" text-anchor="middle" fill="#595959">2</text></svg><svg class="ic" style="left:521px;top:9px" viewBox="0 0 16 16"><path d="M6 4L2 8l4 4M10 4l4 4-4 4" fill="none" stroke="#595959" stroke-width="1.500"/></svg><svg class="ic" style="left:553px;top:9px" viewBox="0 0 16 16"><path d="M5.200 2C3 2 3.700 5 3.700 6S2.200 8 2.200 8s1.500 1 1.500 2-.7 4 1.500 4M10.800 2c2.200 0 1.500 3 1.500 4s1.500 2 1.500 2-1.500 1-1.500 2 .7 4-1.500 4" fill="none" stroke="#595959" stroke-width="1.800"/><circle cx="8" cy="6" r="1.300" fill="#595959"/><path d="M6.800 9h2.400v1.700L8 12.500H6.900l.6-1.800h-.7z" fill="#595959"/></svg><svg class="ic" style="left:9px;top:43px" viewBox="0 0 16 16"><rect x="0" y="7" width="16" height="2" fill="#595959"/></svg><svg class="ic" style="left:41px;top:43px" viewBox="0 0 16 16"><rect x="5" y="1" width="11" height="2" fill="#595959"/><rect x="5" y="6.800" width="11" height="2" fill="#595959"/><rect x="5" y="12.600" width="11" height="2" fill="#595959"/><circle cx="1.900" cy="2" r="1.900" fill="#595959"/><circle cx="1.900" cy="7.800" r="1.900" fill="#595959"/><circle cx="1.900" cy="13.600" r="1.900" fill="#595959"/></svg><i class="cr" style="left:68px;top:49px"></i><svg class="ic" style="left:90px;top:43px" viewBox="0 0 16 16"><rect x="5.500" y="1" width="10.500" height="2" fill="#595959"/><rect x="5.500" y="6.800" width="10.500" height="2" fill="#595959"/><rect x="5.500" y="12.600" width="10.500" height="2" fill="#595959"/><text x="2.300" y="4.300" font-size="6" font-weight="700" text-anchor="middle" fill="#595959">1</text><text x="2.300" y="10.200" font-size="6" font-weight="700" text-anchor="middle" fill="#595959">2</text><text x="2.300" y="16" font-size="6" font-weight="700" text-anchor="middle" fill="#595959">3</text></svg><i class="cr" style="left:117px;top:49px"></i><svg class="ic" style="left:138px;top:43px" viewBox="0 0 16 16"><g fill="none" stroke="#595959" stroke-width="1.700"><path d="M6.800 9.200a3 3 0 0 1 0-4.200l2.700-2.700a3 3 0 0 1 4.200 4.200l-1.600 1.600"/><path d="M9.200 6.800a3 3 0 0 1 0 4.200l-2.700 2.700a3 3 0 0 1-4.200-4.200l1.600-1.600"/></g></svg><svg class="ic" style="left:171px;top:43px" viewBox="0 0 16 16"><rect x=".7" y="2.200" width="14.600" height="11.600" fill="none" stroke="#595959" stroke-width="1.400"/><path d="M2.500 12l3.500-5.500 2.500 3.500 2-2 3 4z" fill="#595959"/><circle cx="11.700" cy="5.700" r="1.300" fill="#595959"/></svg><svg class="ic" style="left:203px;top:43px" viewBox="0 0 16 16"><path d="M.5 8C3 4 5.500 3 8 3s5 1 7.500 5C13 12 10.500 13 8 13S3 12 .5 8z" fill="none" stroke="#595959" stroke-width="1.300"/><circle cx="8" cy="8" r="3.200" fill="#595959"/><circle cx="7" cy="7" r="1" fill="#fff"/></svg><svg class="ic" style="left:235px;top:43px" viewBox="0 0 16 16"><path d="M3.700 1.200h8.600v13.300L8 10.500l-4.300 4z" fill="none" stroke="#595959" stroke-width="1.400"/></svg><svg class="ic" style="left:267px;top:43px" viewBox="0 0 16 16"><path d="M2.500 0v5.500h11V0M2.500 16v-5.500h11V16" fill="none" stroke="#595959" stroke-width="1.100"/><path d="M0 8h2.500M4 8h2M7 8h2M10 8h2M13.500 8H16" stroke="#595959" stroke-width="1.100"/></svg><svg class="ic" style="left:299px;top:43px" viewBox="0 0 16 16"><circle cx="8" cy="9" r="5" fill="none" stroke="#595959" stroke-width="1.400"/><path d="M8 6v3.200l2 1.500" fill="none" stroke="#595959" stroke-width="1.100"/><path d="M1.800 4.300a2.300 2.300 0 0 1 3-2.500M14.200 4.300a2.300 2.300 0 0 0-3-2.500" fill="none" stroke="#595959" stroke-width="1.300"/></svg><i class="cr" style="left:325px;top:49px"></i><svg class="ic" style="left:348px;top:43px" viewBox="0 0 16 16"><rect x=".6" y="2.600" width="14.800" height="10.800" fill="none" stroke="#595959" stroke-width="1.200"/><path d="M3.500 2.600v10.800M12.500 2.600v10.800M.6 5.500h2.900M.6 8h2.900M.6 10.500h2.900M12.500 5.500h2.900M12.500 8h2.900M12.500 10.500h2.900" stroke="#595959" stroke-width="1"/><path d="M6.300 5.200v5.600L10.300 8z" fill="#595959"/></svg><svg class="ic" style="left:380px;top:43px" viewBox="0 0 16 16"><rect x=".8" y="1.800" width="14.400" height="12.400" fill="none" stroke="#595959" stroke-width="1.600"/><path d="M.8 6h14.400M.8 10h14.400M5.600 1.800v12.400M10.400 1.800v12.400" stroke="#595959" stroke-width="1.300"/></svg><i class="cr" style="left:400px;top:49px"></i><svg class="ic" style="left:424px;top:43px" viewBox="0 0 16 16"><circle cx="8" cy="8" r="7.200" fill="none" stroke="#595959" stroke-width="1.300"/><circle cx="5.500" cy="6" r="1.100" fill="#595959"/><circle cx="10.500" cy="6" r="1.100" fill="#595959"/><path d="M3.800 9.300q4.200 1.600 8.400 0c-.4 2.400-2.100 3.700-4.200 3.700s-3.800-1.300-4.200-3.700z" fill="#595959"/></svg><svg class="ic" style="left:456px;top:43px" viewBox="0 0 16 16"><text x="8" y="12" font-size="13.500" font-weight="700" text-anchor="middle" fill="#595959">A</text><rect x="0" y="14.600" width="16" height="2" fill="#595959"/></svg><i class="cr" style="left:483px;top:49px"></i><svg class="ic" style="left:505px;top:43px" viewBox="0 0 16 16"><rect x="0" y="0" width="16" height="15" fill="#bdbdbd"/><text x="8" y="12" font-size="13.500" font-weight="700" text-anchor="middle" fill="#595959">A</text><rect x="0" y="14.800" width="16" height="1.800" fill="#8c8c8c"/></svg><i class="cr" style="left:531px;top:49px"></i><svg class="ic" style="left:554px;top:43px" viewBox="0 0 16 16"><path d="M0 0h5.800L3.900 1.900 7 5 5 7 1.900 3.900 0 5.800zM16 0v5.800l-1.900-1.900L11 7 9 5l3.100-3.100L10.200 0zM0 16v-5.800l1.900 1.900L5 9l2 2-3.100 3.100L5.800 16zM16 16h-5.800l1.900-1.900L9 11l2-2 3.100 3.100L16 10.200z" fill="#444"/></svg></div>
      <div class="sb"><div class="t">0 字 由TINY驱动</div>
        <svg class="abs" style="left:819px;top:21px" width="10" height="10" viewBox="0 0 10 10"><path d="M8 .5h2M6 2.500h4M4 4.500h6M2 6.500h8M0 8.500h10" stroke="#b0b0b0" stroke-width="1" stroke-dasharray="1 1"/></svg>
      </div>
    </div>
    <div class="fbtn" style="left:773px;width:74px;border:1px solid #dcdfe6;color:#606266;background:#fff">取 消</div>
    <div class="fbtn" style="left:861px;width:70px;border:1px solid #409eff;color:#fff;background:#409eff;font-weight:500">保存</div>
  </div>
</div>
<div id="vscroll"><svg class="abs" style="left:4px;top:7px" width="9" height="5" viewBox="0 0 9 5"><path d="M0 5h9L4.500 0z" fill="#505050"/></svg><div class="thumb"></div><svg class="abs" style="left:4px;top:926px" width="9" height="5" viewBox="0 0 9 5"><path d="M0 0h9L4.500 5z" fill="#a3a3a3"/></svg></div>
</body>
</html>
